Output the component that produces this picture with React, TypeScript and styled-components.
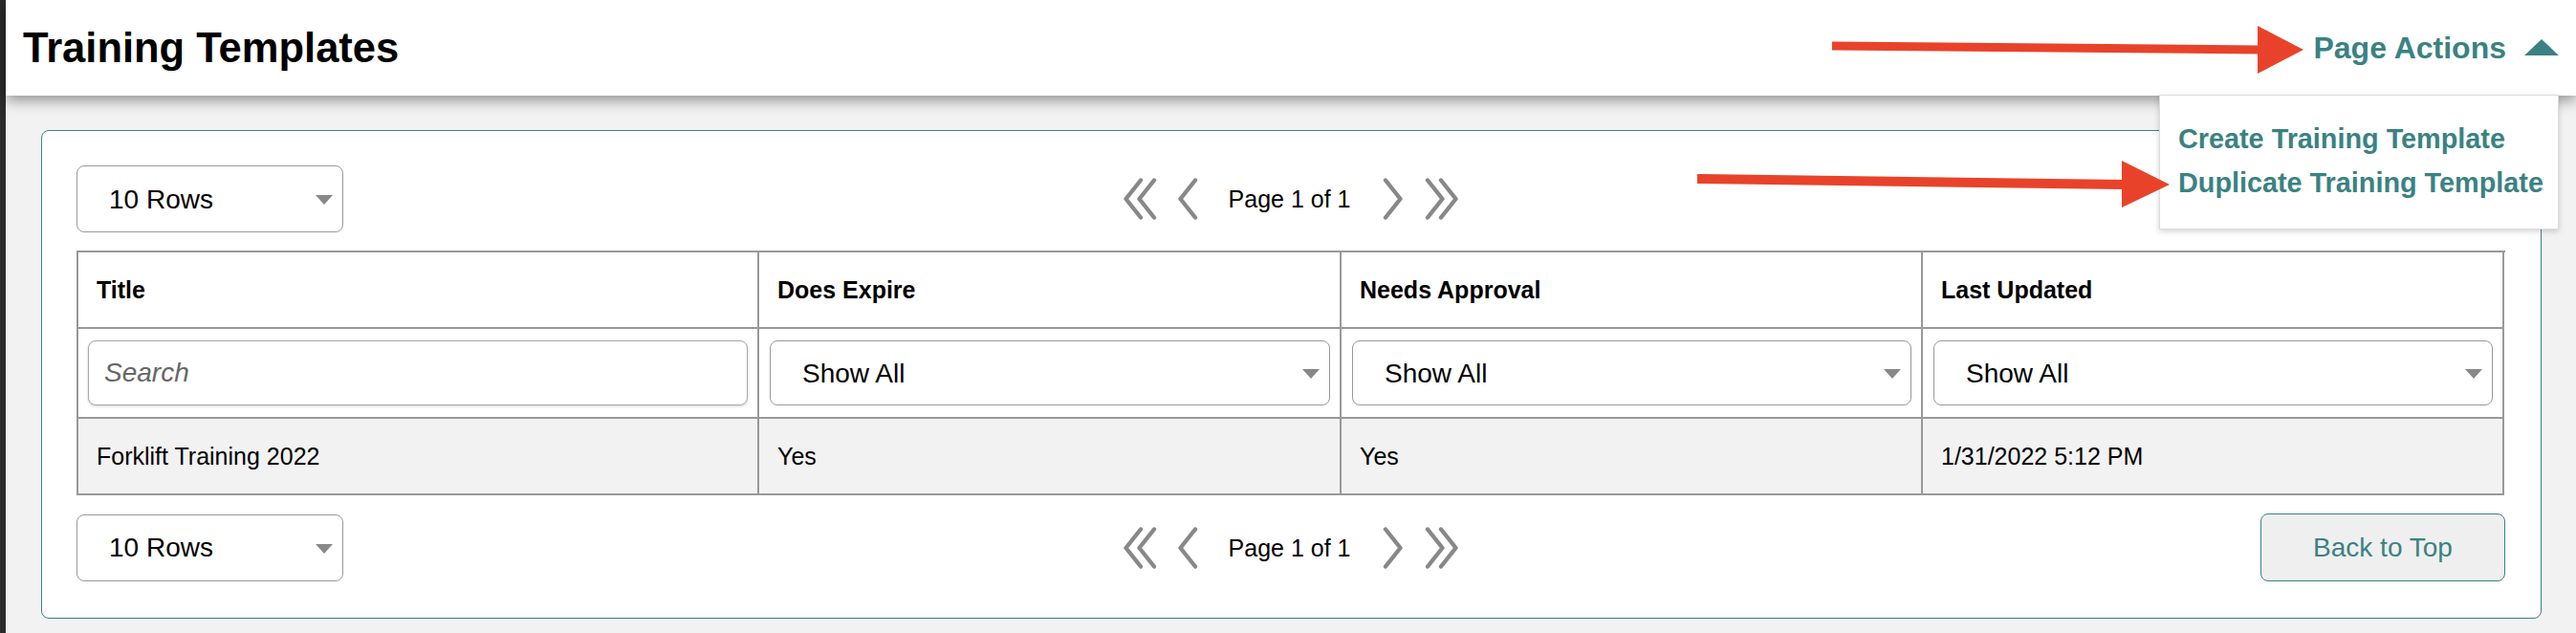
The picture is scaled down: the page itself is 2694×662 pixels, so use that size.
import React from 'react'
import styled, { createGlobalStyle } from 'styled-components'

const TEAL = '#3a8282'
const GRID_LINE = '#999'

const GlobalStyle = createGlobalStyle`
  html, body {
    margin: 0;
    padding: 0;
    background: #f2f2f2;
    font-family: 'Liberation Sans', Arial, Helvetica, sans-serif;
    color: #000;
  }
  * {
    box-sizing: border-box;
  }
`

type Template = {
  title: string
  doesExpire: string
  needsApproval: string
  lastUpdated: string
}

const templates: Template[] = [
  {
    title: 'Forklift Training 2022',
    doesExpire: 'Yes',
    needsApproval: 'Yes',
    lastUpdated: '1/31/2022 5:12 PM',
  },
]

function Chevron({ double, flip }: { double?: boolean; flip?: boolean }) {
  const width = double ? 36 : 22
  const offsets = double ? [0, 14] : [0]
  return (
    <PagerIcon
      width={width}
      height={44}
      viewBox={`0 0 ${width} 44`}
      style={flip ? { transform: 'scaleX(-1)' } : undefined}
    >
      {offsets.map((dx) => (
        <polyline
          key={dx}
          points={`${dx + 19},2.5 ${dx + 3.5},22 ${dx + 19},41.5`}
          fill="none"
          stroke="#888"
          strokeWidth={4.4}
          strokeLinecap="round"
          strokeLinejoin="round"
        />
      ))}
    </PagerIcon>
  )
}

function PagerControls() {
  return (
    <Pager>
      <PagerButton type="button">
        <Chevron double />
      </PagerButton>
      <PagerButton type="button" $gap={21}>
        <Chevron />
      </PagerButton>
      <PageLabel>Page 1 of 1</PageLabel>
      <PagerButton type="button">
        <Chevron flip />
      </PagerButton>
      <PagerButton type="button" $gap={22}>
        <Chevron double flip />
      </PagerButton>
    </Pager>
  )
}

function RowsPicker() {
  return (
    <SelectWrap $width={279} $height={70}>
      <Select defaultValue="10">
        <option value="10">10 Rows</option>
        <option value="25">25 Rows</option>
        <option value="50">50 Rows</option>
      </Select>
    </SelectWrap>
  )
}

function ShowAllFilter() {
  return (
    <SelectWrap $height={68}>
      <Select defaultValue="all">
        <option value="all">Show All</option>
        <option value="yes">Yes</option>
        <option value="no">No</option>
      </Select>
    </SelectWrap>
  )
}

export default function App() {
  return (
    <>
      <GlobalStyle />
      <Shell>
        <SideRail />
        <Main>
          <Header>
            <PageTitle>Training Templates</PageTitle>
            <ActionsToggle type="button">
              Page Actions
              <svg width="36" height="17" viewBox="0 0 36 17">
                <polygon points="18,0 36,17 0,17" fill={TEAL} />
              </svg>
            </ActionsToggle>
            <ActionsMenu>
              <ActionsLink href="#create">Create Training Template</ActionsLink>
              <ActionsLink href="#duplicate">Duplicate Training Template</ActionsLink>
            </ActionsMenu>
          </Header>

          <Content>
            <Card>
              <Toolbar>
                <RowsPicker />
                <PagerControls />
                <span />
              </Toolbar>

              <Grid role="table">
                <HeadCell role="columnheader">Title</HeadCell>
                <HeadCell role="columnheader">Does Expire</HeadCell>
                <HeadCell role="columnheader">Needs Approval</HeadCell>
                <HeadCell role="columnheader">Last Updated</HeadCell>

                <FilterCell>
                  <SearchInput placeholder="Search" />
                </FilterCell>
                <FilterCell $left={11}>
                  <ShowAllFilter />
                </FilterCell>
                <FilterCell $left={11}>
                  <ShowAllFilter />
                </FilterCell>
                <FilterCell $left={11}>
                  <ShowAllFilter />
                </FilterCell>

                {templates.map((t) => (
                  <React.Fragment key={t.title}>
                    <DataCell>{t.title}</DataCell>
                    <DataCell>{t.doesExpire}</DataCell>
                    <DataCell>{t.needsApproval}</DataCell>
                    <DataCell>{t.lastUpdated}</DataCell>
                  </React.Fragment>
                ))}
              </Grid>

              <Toolbar>
                <RowsPicker />
                <PagerControls />
                <BackToTop type="button">Back to Top</BackToTop>
              </Toolbar>
            </Card>
          </Content>
        </Main>

        <Callouts width="2694" height="662" viewBox="0 0 2694 662">
          <line x1="1916" y1="48" x2="2363" y2="52" stroke="#e8432a" strokeWidth="9" />
          <polygon points="2361,27 2409,52 2361,77" fill="#e8432a" />
          <line x1="1775" y1="187" x2="2221" y2="193" stroke="#e8432a" strokeWidth="10" />
          <polygon points="2219,168 2269,193 2219,217" fill="#e8432a" />
        </Callouts>
      </Shell>
    </>
  )
}

const Shell = styled.div`
  position: relative;
  display: flex;
  width: 2694px;
  min-height: 662px;
`

const SideRail = styled.div`
  width: 6px;
  flex: none;
  background: #2b2b2b;
`

const Main = styled.div`
  flex: 1;
  display: flex;
  flex-direction: column;
`

const Header = styled.header`
  position: relative;
  z-index: 2;
  height: 100px;
  display: flex;
  align-items: center;
  justify-content: space-between;
  padding: 0 18px 0 18px;
  background: #fff;
  box-shadow: 0 5px 14px rgba(0, 0, 0, 0.4);
`

const PageTitle = styled.h1`
  margin: 0;
  font-size: 43.5px;
  line-height: 50px;
  font-weight: bold;
  color: #000;
`

const ActionsToggle = styled.button`
  display: flex;
  align-items: center;
  gap: 19px;
  padding: 0;
  border: none;
  background: transparent;
  font-family: inherit;
  font-size: 32px;
  line-height: 37px;
  font-weight: bold;
  color: ${TEAL};
  cursor: pointer;

  svg {
    margin-top: -2px;
  }
`

const ActionsMenu = styled.nav`
  position: absolute;
  top: 99px;
  right: 18px;
  width: 418px;
  padding: 22px 18px 25px 19px;
  background: #fff;
  border: 1px solid #dcdcdc;
  box-shadow: 0 2px 6px rgba(0, 0, 0, 0.18);
`

const ActionsLink = styled.a`
  display: block;
  font-size: 28.8px;
  line-height: 46px;
  font-weight: bold;
  color: ${TEAL};
  text-decoration: none;
  white-space: nowrap;
`

const Content = styled.main`
  padding: 36px 36px 15px 37px;
`

const Card = styled.section`
  display: flex;
  flex-direction: column;
  gap: 19px;
  padding: 36px 37px 38px 36px;
  background: #fff;
  border: 1px solid ${TEAL};
  border-radius: 8px;
`

const Toolbar = styled.div`
  display: grid;
  grid-template-columns: 1fr auto 1fr;
  align-items: center;

  & > :last-child {
    justify-self: end;
  }
`

const Pager = styled.div`
  display: flex;
  align-items: center;
`

const PagerButton = styled.button<{ $gap?: number }>`
  display: flex;
  padding: 0;
  margin-left: ${(p) => p.$gap ?? 0}px;
  border: none;
  background: transparent;
  cursor: pointer;
`

const PagerIcon = styled.svg`
  display: block;
`

const PageLabel = styled.span`
  margin: 0 34px 0 32px;
  font-size: 25px;
  line-height: 30px;
  white-space: nowrap;
`

const SelectWrap = styled.div<{ $width?: number; $height: number }>`
  position: relative;
  width: ${(p) => (p.$width ? `${p.$width}px` : '100%')};
  height: ${(p) => p.$height}px;

  &::after {
    content: '';
    position: absolute;
    right: 11px;
    top: 50%;
    margin-top: -4px;
    border-left: 9px solid transparent;
    border-right: 9px solid transparent;
    border-top: 10px solid #888;
    pointer-events: none;
  }
`

const Select = styled.select`
  appearance: none;
  width: 100%;
  height: 100%;
  padding: 0 44px 0 33px;
  border: 1px solid ${GRID_LINE};
  border-radius: 8px;
  background: #fff;
  font-family: inherit;
  font-size: 28px;
  color: #000;
  outline: none;
`

const Grid = styled.div`
  display: grid;
  grid-template-columns: 712px 609px 608px 608px;
  grid-auto-rows: auto;
  border-top: 2px solid ${GRID_LINE};
  border-left: 2px solid ${GRID_LINE};
`

const Cell = styled.div`
  display: flex;
  align-items: center;
  border-right: 2px solid ${GRID_LINE};
  border-bottom: 2px solid ${GRID_LINE};
`

const HeadCell = styled(Cell)`
  height: 80px;
  padding: 0 19px;
  font-size: 25px;
  font-weight: bold;
`

const FilterCell = styled(Cell)<{ $left?: number }>`
  height: 94px;
  padding: 12px 10px 12px ${(p) => p.$left ?? 10}px;
`

const DataCell = styled(Cell)`
  height: 80px;
  padding: 0 19px;
  background: #f2f2f2;
  font-size: 25px;
`

const SearchInput = styled.input`
  width: 100%;
  height: 68px;
  padding: 0 16px;
  border: 1px solid #a8a8a8;
  border-radius: 8px;
  box-shadow: 0 1px 3px rgba(0, 0, 0, 0.18);
  font-family: inherit;
  font-size: 28px;
  color: #000;
  outline: none;

  &::placeholder {
    color: #666;
    font-style: italic;
  }
`

const BackToTop = styled.button`
  width: 256px;
  height: 71px;
  border: 1px solid ${TEAL};
  border-radius: 8px;
  background: #efefef;
  font-family: inherit;
  font-size: 28px;
  color: ${TEAL};
  cursor: pointer;
`

const Callouts = styled.svg`
  position: absolute;
  top: 0;
  left: 0;
  z-index: 5;
  pointer-events: none;
`
